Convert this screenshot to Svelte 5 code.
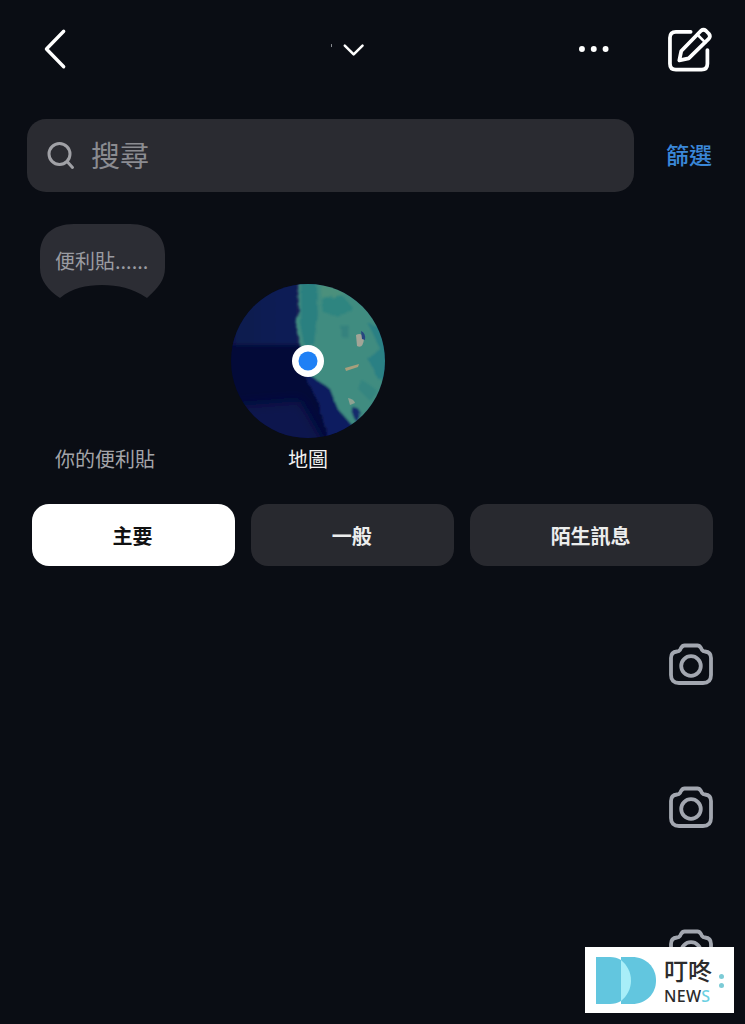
<script lang="ts">
  const tabs = [
    { label: '主要', active: true, grow: 203 },
    { label: '一般', active: false, grow: 203 },
    { label: '陌生訊息', active: false, grow: 243 }
  ]
  const cameras = [0, 1, 2]
</script>

<div class="page">
  <header class="topbar">
    <svg class="back" width="24" height="42" viewBox="0 0 24 42" fill="none">
      <path d="M21 3 L3.5 21 L21 39" stroke="#fff" stroke-width="3.4" stroke-linecap="round" stroke-linejoin="round" />
    </svg>
    <svg class="chevron" width="36" height="14" viewBox="0 0 36 14" fill="none">
      <rect x="1" y="1" width="1" height="3" fill="#8d9096" />
      <path d="M15 2.5 L24 11.5 L33 2.5" stroke="#fff" stroke-width="2.6" stroke-linecap="round" stroke-linejoin="round" />
    </svg>
    <svg class="dots" width="32" height="8" viewBox="0 0 32 8" fill="#fff">
      <circle cx="4" cy="4" r="3" /><circle cx="16" cy="4" r="3" /><circle cx="28" cy="4" r="3" />
    </svg>
    <svg class="compose" width="46" height="46" viewBox="0 0 46 46" fill="none" stroke="#fff" stroke-width="3.8" stroke-linecap="round" stroke-linejoin="round">
      <path d="M24 4.5 H9 Q3 4.5 3 10.5 V37 Q3 43 9 43 H35 Q41 43 41 37 V23" />
      <path d="M12.5 33.5 L14.5 24 L34.5 3.5 Q37 1.5 39.5 3.5 L42.5 6.5 Q44.5 9 42.5 11.5 L22 31.5 Z" />
      <path d="M31 7.5 L39 15.5" stroke-width="2.6" />
    </svg>
  </header>

  <div class="search-row">
    <div class="search">
      <svg width="30" height="30" viewBox="0 0 30 30" fill="none" stroke="#a0a1a6" stroke-width="3" stroke-linecap="round">
        <circle cx="13.5" cy="13" r="10.5" />
        <path d="M21.5 21 L26.5 26.5" />
      </svg>
      <span>搜尋</span>
    </div>
    <span class="filter">篩選</span>
  </div>

  <section class="notes">
    <div class="note-col">
      <div class="bubble-box">
        <svg class="bubble" width="125" height="74" viewBox="0 0 125 74">
          <path fill="#2c2d34" d="M34 0 H90 C112 0 125 12 125 30 V44 C125 56 118 64 107 74 C92 64 78 61 62 61 C46 61 32 64 20 74 C8 66 0 56 0 44 V30 C0 12 12 0 34 0 Z" />
        </svg>
        <span class="bubble-text">便利貼......</span>
      </div>
      <span class="note-label">你的便利貼</span>
    </div>
    <div class="map-col">
      <svg width="156" height="156" viewBox="0 0 156 156">
        <defs>
          <clipPath id="globe"><circle cx="78" cy="78" r="77" /></clipPath>
          <linearGradient id="upper" x1="0" x2="1" y1="0" y2="0">
            <stop offset="0" stop-color="#0c184c" />
            <stop offset="1" stop-color="#132159" />
          </linearGradient>
          <filter id="rough" x="-5%" y="-5%" width="110%" height="110%">
            <feTurbulence type="fractalNoise" baseFrequency="0.12" numOctaves="3" seed="4" result="n" />
            <feDisplacementMap in="SourceGraphic" in2="n" scale="5" />
            <feGaussianBlur stdDeviation="1" />
          </filter>
          <filter id="soft" x="-20%" y="-20%" width="140%" height="140%"><feGaussianBlur stdDeviation="2" /></filter>
          <filter id="softer" x="-30%" y="-30%" width="160%" height="160%"><feGaussianBlur stdDeviation="6" /></filter>
        </defs>
        <g clip-path="url(#globe)">
          <rect width="156" height="156" fill="#030a38" />
          <rect x="-10" y="-10" width="96" height="72" fill="url(#upper)" filter="url(#soft)" />
          <path fill="#0a174e" filter="url(#softer)" d="M-10 124 L70 118 L100 170 H-10 Z" />
          <g filter="url(#rough)">
            <path fill="#101f60" d="M74 78 L78 100 L88 118 L100 165 H136 L130 100 Z" />
            <path fill="#3f8c80" d="M67 -6 L68 28 L66 45 L70 62 L80 92 L100 106 L108 126 L122 142 L132 146 L170 110 V-6 Z" />
            <path fill="#2b8080" d="M70 -6 H86 L87 30 L84 62 L74 62 L70 40 Z" />
            <path fill="#2f8580" d="M92 16 L112 12 L122 24 L108 34 L94 30 Z" />
            <path fill="#4b907c" d="M90 -2 H118 L112 12 L92 16 Z" />
            <path fill="#2c8084" d="M138 40 L170 50 V100 L148 96 L138 76 L150 66 Z" />
            <path fill="#35827e" d="M110 44 L118 42 L120 56 L112 54 Z" />
            <path fill="#358580" d="M130 96 L148 108 L140 118 L128 106 Z" />
            <path fill="#16296c" d="M122 124 Q129 124 131 130 L127 139 Q121 133 122 124 Z" />
          </g>
          <path fill="#a3a597" filter="blur(0.5px)" d="M126 52 Q132 49 134 56 Q133 66 127 63 Z" />
          <path fill="#27467f" filter="blur(0.5px)" d="M131 48 Q136 50 135 57 L132 56 Z" />
          <path fill="#a89f7c" filter="blur(0.6px)" d="M115 85 L129 81 L128 84 L116 88 Z" />
          <path fill="#8ea292" filter="blur(0.6px)" d="M118 115 Q124 116 125 120 L120 122 Z" />
        </g>
        <circle cx="78" cy="78" r="16" fill="#fff" />
        <circle cx="78" cy="78" r="9.5" fill="#1f80f5" />
      </svg>
      <span class="map-label">地圖</span>
    </div>
  </section>

  <nav class="tabs">
    {#each tabs as tab}
      <button class="tab" class:active={tab.active} style="flex-grow: {tab.grow}">{tab.label}</button>
    {/each}
  </nav>

  <div class="threads">
    {#each cameras as c}
      <svg class="camera" width="44" height="42" viewBox="0 0 44 42" fill="none" stroke="#a3a7b0" stroke-width="3.8" stroke-linejoin="round">
        <path d="M15.5 2.5 H28.5 Q30.5 2.5 32 5 L33 7 Q34 8.5 36 8.5 Q42 9 42 15 V32 Q42 40 34 40 H10 Q2 40 2 32 V15 Q2 9 8 8.5 Q10 8.5 11 7 L12 5 Q13.5 2.5 15.5 2.5 Z" />
        <circle cx="22" cy="23" r="9.8" />
      </svg>
    {/each}
  </div>

  <div class="badge">
    <svg width="60" height="47" viewBox="0 0 60 47">
      <path fill="#62c6df" d="M0 0 H14 C18 0 22 1 25 3 C31 8 35 15 35 23.5 C35 32 31 39 25 44 C22 46 18 47 14 47 H0 Z" />
      <path fill="#62c6df" d="M25 0 H36 C50 0 60 10 60 23.5 C60 37 50 47 36 47 H25 Z" />
      <path fill="#a8eef8" d="M25 3 C31 8 35 15 35 23.5 C35 32 31 39 25 44 Z" />
    </svg>
    <div class="badge-text">
      <span class="badge-zh">叮咚</span>
      <span class="badge-en">NEW<em>S</em></span>
    </div>
    <div class="badge-dots"><i></i><i></i></div>
  </div>
</div>

<style>
  :global(body) {
    margin: 0;
    background: #0a0d14;
  }

  .page {
    position: relative;
    width: 745px;
    height: 1024px;
    overflow: hidden;
    background: #0a0d14;
    font-family: "Noto Sans CJK TC", "Liberation Sans", sans-serif;
    color: #fff;
  }

  .topbar {
    height: 119px;
    box-sizing: border-box;
    padding: 27px 33px 0 43px;
    display: flex;
    align-items: flex-start;
  }

  .back { margin-top: 1px; }
  .chevron { margin: 16px 0 0 263px; }
  .dots { margin: 18px 0 0 213px; }
  .compose { margin-left: 57px; }

  .search-row {
    display: flex;
    align-items: center;
    padding: 0 33px 0 27px;
    justify-content: space-between;
  }

  .search {
    width: 607px;
    height: 73px;
    box-sizing: border-box;
    padding-left: 19px;
    border-radius: 19px;
    background: #2a2b31;
    display: flex;
    align-items: center;
    gap: 15px;
    color: #8b8c91;
    font-size: 29px;
  }

  .search span {
    line-height: 40px;
    margin-top: -3px;
  }

  .filter {
    color: #3a87d8;
    font-size: 23px;
    font-weight: 500;
    line-height: 30px;
    margin-top: -3px;
  }

  .notes {
    display: flex;
    height: 312px;
    padding-top: 32px;
    box-sizing: border-box;
  }

  .note-col {
    width: 230px;
    display: flex;
    flex-direction: column;
    box-sizing: border-box;
    padding-left: 40px;
  }

  .bubble-box {
    position: relative;
    width: 125px;
    height: 74px;
  }

  .bubble { display: block; }

  .bubble-text {
    position: absolute;
    left: 15px;
    top: 22px;
    font-size: 20px;
    line-height: 30px;
    color: #9a9ba1;
    white-space: nowrap;
  }

  .note-label {
    margin-top: 146px;
    width: 130px;
    text-align: center;
    font-size: 20px;
    line-height: 30px;
    color: #a3a4a9;
  }

  .map-col {
    margin-top: 59px;
    width: 156px;
    display: flex;
    flex-direction: column;
    align-items: flex-start;
  }

  .map-col svg { display: block; }

  .map-label {
    margin: 5px 0 0 58px;
    font-size: 20px;
    line-height: 30px;
    color: #f2f2f2;
  }

  .tabs {
    display: flex;
    gap: 16px;
    padding: 0 32px;
  }

  .tab {
    flex: 1 1 0;
    height: 62px;
    border: 0;
    border-radius: 17px;
    background: #28292f;
    color: #eceded;
    font-family: inherit;
    font-size: 20px;
    font-weight: 700;
    padding: 0 2px 0 0;
  }

  .tab.active {
    background: #fff;
    color: #111;
  }

  .threads {
    display: flex;
    flex-direction: column;
    align-items: flex-end;
    gap: 101px;
    padding: 77px 32px 0 0;
  }

  .camera { display: block; }

  .badge {
    position: absolute;
    left: 585px;
    top: 947px;
    width: 149px;
    height: 66px;
    background: #fff;
    box-sizing: border-box;
    padding: 10px 0 0 11px;
    display: flex;
    align-items: flex-start;
    gap: 8px;
  }

  .badge svg { display: block; flex-shrink: 0; }

  .badge-text {
    display: flex;
    flex-direction: column;
    color: #2b2b2b;
  }

  .badge-zh {
    font-size: 24px;
    line-height: 28px;
    font-weight: 500;
    margin-top: -1px;
  }

  .badge-en {
    font-family: "Noto Sans", "Liberation Sans", sans-serif;
    font-size: 16px;
    line-height: 20px;
    font-weight: 500;
    letter-spacing: 0.3px;
    margin-top: 2px;
  }

  .badge-en em {
    font-style: normal;
    color: #6bd0e2;
  }

  .badge-dots {
    display: flex;
    flex-direction: column;
    gap: 4px;
    margin: 17px 0 0 -1px;
  }

  .badge-dots i {
    display: block;
    width: 5px;
    height: 5px;
    border-radius: 50%;
    background: #7ccbd6;
  }
</style>
